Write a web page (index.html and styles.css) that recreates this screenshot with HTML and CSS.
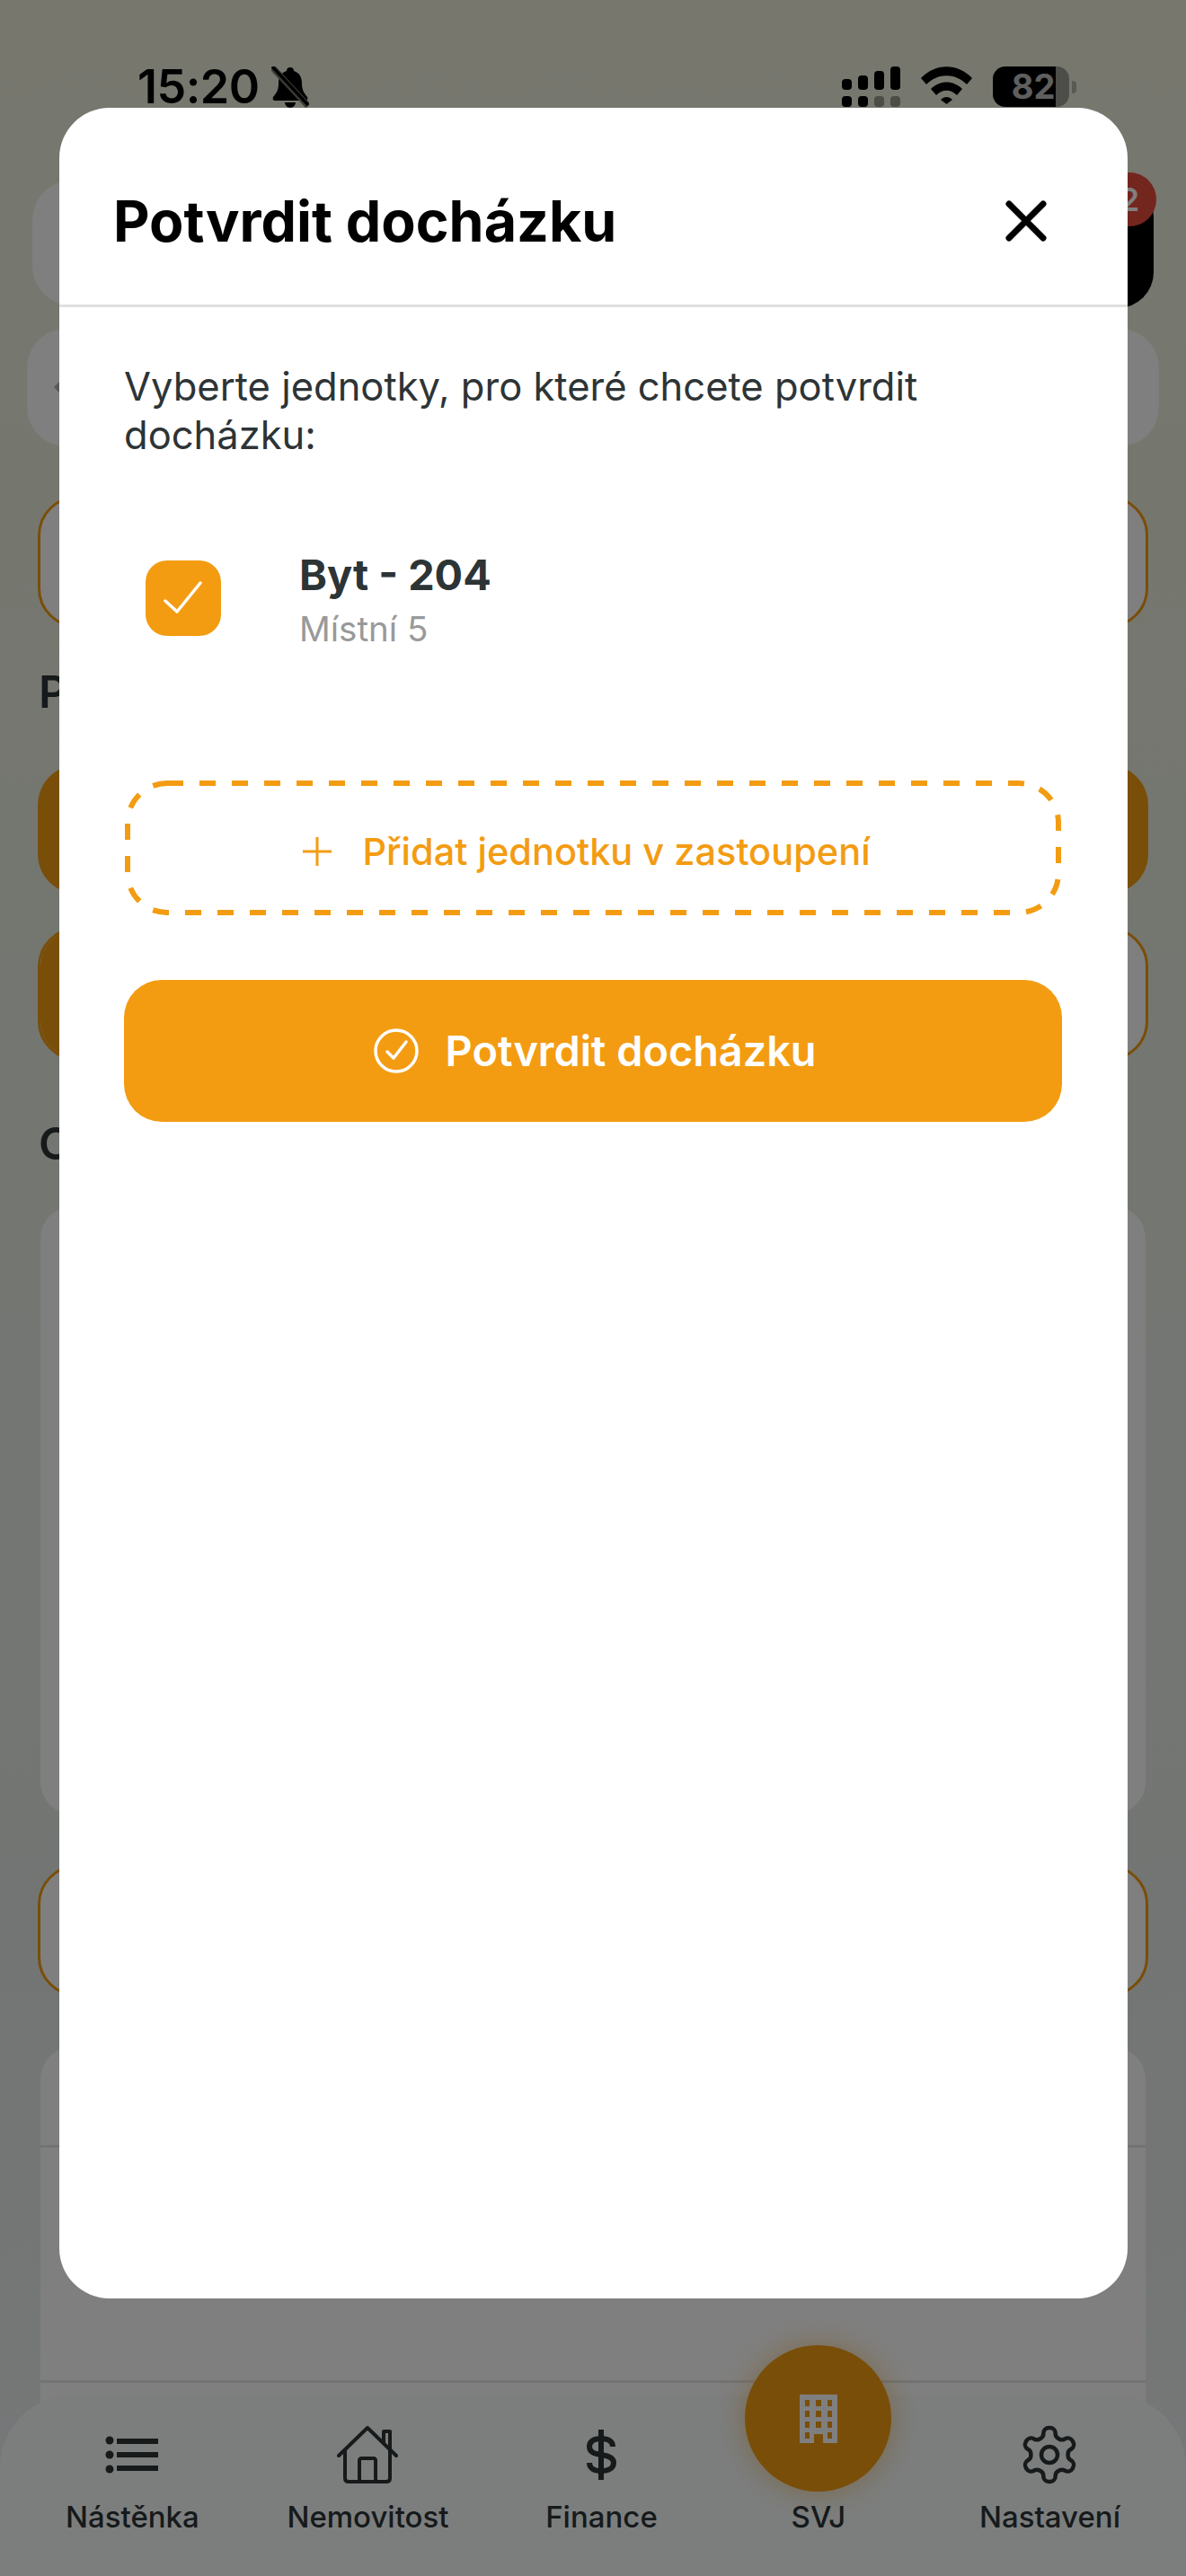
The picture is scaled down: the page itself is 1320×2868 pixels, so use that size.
FILE: index.html
```html
<!DOCTYPE html>
<html lang="cs">
<head>
  <meta charset="UTF-8">
  <meta name="viewport" content="width=device-width, initial-scale=1.0">
  <title>Potvrdit docházku</title>
  <link rel="stylesheet" href="styles.css">
</head>
<body>
  <div class="screen">
    <div class="status-bar">
      <div class="status-left">
        <span class="time">15:20</span>
        <svg class="bell" viewBox="0 0 42 46">
          <path d="M21 1c3 0 4 2 4 4 7 2 9 8 9 14 0 7 2 10 6 15 1 2 0 4-2 4H4c-2 0-3-2-2-4 4-5 6-8 6-15 0-6 2-12 9-14 0-2 1-4 4-4z"/>
          <path d="M15 40h12c0 3-3 6-6 6s-6-3-6-6z"/>
          <path d="M1 1l40 43" stroke="#77776e" stroke-width="7"/>
          <path d="M1 0l40 43" stroke="#000" stroke-width="3.5"/>
        </svg>
      </div>
      <div class="status-right">
        <svg class="signal" viewBox="0 0 65 45">
          <rect x="0" y="14" width="11" height="12" rx="4"/>
          <rect x="18" y="10" width="11" height="16" rx="4"/>
          <rect x="36" y="5" width="11" height="21" rx="4"/>
          <rect x="54" y="0" width="11" height="26" rx="4"/>
          <rect x="0" y="33" width="11" height="12" rx="4"/>
          <rect x="18" y="33" width="11" height="12" rx="4"/>
          <rect class="signal-off" x="36" y="33" width="11" height="12" rx="4"/>
          <rect class="signal-off" x="54" y="33" width="11" height="12" rx="4"/>
        </svg>
        <svg class="wifi" viewBox="0 0 57 42">
          <path d="M0 13C16-4 41-4 57 13l-6 7C38 7 19 7 6 20z"/>
          <path d="M11 25c10-10 25-10 35 0l-6 7c-7-7-16-7-23 0z"/>
          <path d="M22 37c4-4 9-4 13 0l-6.500 5z"/>
        </svg>
        <div class="battery">
          <div class="battery-body"><span class="battery-level">82</span></div>
          <div class="battery-nub"></div>
        </div>
      </div>
    </div>

    <div class="top-row">
      <div class="top-card"></div>
      <div class="top-action"><span class="badge">2</span></div>
    </div>
    <div class="search-card"><span class="chevron"></span></div>
    <div class="outline-card outline-first"></div>
    <h3 class="section-title title-first">P</h3>
    <div class="orange-card"></div>
    <div class="outline-card outline-second"><div class="outline-icon"></div></div>
    <h3 class="section-title title-second">C</h3>
    <div class="big-card"></div>
    <div class="outline-card outline-third"></div>
    <div class="list-card">
      <div class="list-row"></div>
      <div class="list-row list-row-tall"></div>
    </div>

    <nav class="tab-bar">
      <div class="tab">
        <div class="tab-icon">
          <svg width="60" height="42" viewBox="0 0 60 42" fill="none" stroke="currentColor" stroke-width="6">
            <path d="M13 6h46M13 21h46M13 36h46"/>
            <circle cx="5" cy="5" r="4.500" fill="currentColor" stroke="none"/>
            <circle cx="5" cy="21" r="4.500" fill="currentColor" stroke="none"/>
            <circle cx="5" cy="37" r="4.500" fill="currentColor" stroke="none"/>
          </svg>
        </div>
        <span class="tab-label">Nástěnka</span>
      </div>
      <div class="tab">
        <div class="tab-icon">
          <svg width="68" height="64" viewBox="0 0 68 64" fill="none" stroke="currentColor" stroke-width="4" stroke-linejoin="round" stroke-linecap="round">
            <path d="M2 33L34 2l32 31"/>
            <path d="M9 28v30c0 2 1 4 4 4h12V38c0-1 1-2 2-2h14c1 0 2 1 2 2v24h12c3 0 4-2 4-4V28"/>
            <path d="M25 62h18"/>
            <path d="M52 19V6h7v20"/>
          </svg>
        </div>
        <span class="tab-label">Nemovitost</span>
      </div>
      <div class="tab tab-finance">
        <div class="tab-icon">
          <svg width="34" height="56" viewBox="0 0 34 56" fill="none" stroke="currentColor" stroke-width="6">
            <path d="M17 0v56"/>
            <path d="M30 19c0-6-5-9-13-9S4 13 4 19s5 8 13 9 14 3 14 9-6 9-14 9-13-3-13-9"/>
          </svg>
        </div>
        <span class="tab-label">Finance</span>
      </div>
      <div class="tab tab-active">
        <div class="fab">
          <svg width="42" height="54" viewBox="0 0 42 54">
            <path class="fab-building" fill-rule="evenodd" d="M0 0h42v54H26V44H16v10H0zM6 6v7h5V6zM18 6v7h6V6zM31 6v7h5V6zM6 18v7h5v-7zM18 18v7h6v-7zM31 18v7h5v-7zM6 30v7h5v-7zM18 30v7h6v-7zM31 30v7h5v-7zM6 42v7h5v-7zM31 42v7h5v-7z"/>
          </svg>
        </div>
        <span class="tab-label">SVJ</span>
      </div>
      <div class="tab">
        <div class="tab-icon">
          <svg width="72" height="72" viewBox="0 0 24 24" fill="none" stroke="currentColor" stroke-width="1.500" stroke-linecap="round" stroke-linejoin="round">
            <path d="M12.220 2h-.44a2 2 0 0 0-2 2v.18a2 2 0 0 1-1 1.730l-.43.25a2 2 0 0 1-2 0l-.15-.08a2 2 0 0 0-2.730.73l-.22.38a2 2 0 0 0 .73 2.730l.15.1a2 2 0 0 1 1 1.720v.51a2 2 0 0 1-1 1.740l-.15.09a2 2 0 0 0-.73 2.730l.22.38a2 2 0 0 0 2.730.73l.15-.08a2 2 0 0 1 2 0l.43.25a2 2 0 0 1 1 1.730V20a2 2 0 0 0 2 2h.44a2 2 0 0 0 2-2v-.18a2 2 0 0 1 1-1.730l.43-.25a2 2 0 0 1 2 0l.15.08a2 2 0 0 0 2.730-.73l.22-.39a2 2 0 0 0-.73-2.730l-.15-.08a2 2 0 0 1-1-1.740v-.5a2 2 0 0 1 1-1.740l.15-.09a2 2 0 0 0 .73-2.730l-.22-.38a2 2 0 0 0-2.730-.73l-.15.08a2 2 0 0 1-2 0l-.43-.25a2 2 0 0 1-1-1.730V4a2 2 0 0 0-2-2z"/>
            <circle cx="12" cy="12" r="3"/>
          </svg>
        </div>
        <span class="tab-label">Nastavení</span>
      </div>
    </nav>

    <div class="overlay">
      <div class="modal">
        <div class="modal-header">
          <h2 class="modal-title">Potvrdit docházku</h2>
          <svg class="modal-close" width="46" height="46" viewBox="0 0 46 46" fill="none" stroke="#000" stroke-width="7" stroke-linecap="round">
            <path d="M4 4l38 38M42 4L4 42"/>
          </svg>
        </div>
        <div class="modal-body">
          <p class="modal-text">Vyberte jednotky, pro které chcete potvrdit docházku:</p>
          <div class="unit">
            <div class="unit-check">
              <svg width="44" height="38" viewBox="0 0 44 38" fill="none" stroke="#fff" stroke-width="3.500" stroke-linecap="round" stroke-linejoin="round">
                <path d="M2 22l13 12L41 2"/>
              </svg>
            </div>
            <div class="unit-info">
              <div class="unit-name">Byt - 204</div>
              <div class="unit-address">Místní 5</div>
            </div>
          </div>
          <div class="add-unit">
            <svg class="add-unit-border" width="1042" height="150" viewBox="0 0 1042 150" fill="none">
              <rect x="3" y="3" width="1036" height="144" rx="44" stroke="#f39c12" stroke-width="6" stroke-dasharray="18 18"/>
            </svg>
            <svg width="32" height="32" viewBox="0 0 32 32" fill="none" stroke="#f39c12" stroke-width="3">
              <path d="M16 0v32M0 16h32"/>
            </svg>
            <span class="add-unit-label">Přidat jednotku v zastoupení</span>
          </div>
          <button class="confirm">
            <svg width="50" height="50" viewBox="0 0 50 50" fill="none" stroke="#fff" stroke-width="3.500" stroke-linecap="round" stroke-linejoin="round">
              <circle cx="25" cy="25" r="23"/>
              <path d="M15 26l7 7 14-18"/>
            </svg>
            <span>Potvrdit docházku</span>
          </button>
        </div>
      </div>
    </div>
  </div>
</body>
</html>
```

FILE: styles.css
```css
* {
  box-sizing: border-box;
}
body {
  margin: 0;
  font-family: Inter, "Noto Sans", sans-serif;
}
.screen {
  position: relative;
  width: 1320px;
  height: 2868px;
  overflow: hidden;
  background: linear-gradient(180deg, #eeeedc 0%, #e8eee2 40%, #e6ebe8 75%, #ecf0f2 100%);
}

/* status bar */
.status-bar {
  display: flex;
  justify-content: space-between;
  height: 201px;
  padding: 74px 122px 0 153px;
}
.status-left {
  display: flex;
  gap: 14px;
  height: 46px;
  align-items: center;
}
.time {
  font-size: 52px;
  font-weight: 600;
  line-height: 46px;
  letter-spacing: -.5px;
  color: #000;
}
.bell {
  width: 42px;
  height: 46px;
}
.status-right {
  display: flex;
  gap: 23px;
  height: 45px;
  align-items: flex-start;
}
.signal {
  width: 65px;
  height: 45px;
}
.signal-off {
  opacity: .35;
}
.wifi {
  width: 57px;
  height: 42px;
}
.battery {
  display: flex;
  align-items: center;
  gap: 3px;
}
.battery-body {
  width: 85px;
  height: 45px;
  border-radius: 14px;
  overflow: hidden;
  background: linear-gradient(90deg, #000 82%, #9a9a92 82%);
  text-align: center;
}
.battery-level {
  display: block;
  width: 86px;
  padding-left: 4px;
  font-size: 38px;
  font-weight: 700;
  line-height: 45px;
  color: #fff;
  opacity: .75;
}
.battery-nub {
  width: 5px;
  height: 14px;
  border-radius: 0 4px 4px 0;
  background: #b4b4aa;
}

/* page behind the dialog */
.top-row {
  display: flex;
  justify-content: space-between;
  margin-left: 36px;
  margin-right: 36px;
  height: 142px;
}
.top-card {
  width: 900px;
  height: 139px;
  background: #fff;
  border-radius: 44px;
}
.top-action {
  position: relative;
  width: 200px;
  height: 142px;
  background: #000;
  border-radius: 40px;
}
.badge {
  position: absolute;
  right: -3px;
  top: -9px;
  width: 60px;
  height: 60px;
  border-radius: 50%;
  background: #e74c3c;
  color: #fff;
  font-size: 36px;
  font-weight: 600;
  line-height: 60px;
  text-align: center;
}
.search-card {
  display: flex;
  align-items: center;
  margin: 23px 30px 0;
  height: 131px;
  padding-left: 30px;
  background: #fff;
  border-radius: 44px;
}
.chevron {
  width: 0;
  height: 0;
  margin-top: -2px;
  border: 10px solid transparent;
  border-left: 0;
  border-right-color: #b0b0b0;
}
.outline-card {
  margin-left: 42px;
  margin-right: 42px;
  background: #fff;
  border: 3px solid #f39c12;
  border-radius: 44px;
  overflow: hidden;
}
.outline-first {
  margin-top: 55px;
  height: 147px;
}
.section-title {
  margin: 0 0 0 43px;
  font-size: 50px;
  font-weight: 600;
  line-height: 60px;
  color: #2d3436;
}
.title-first {
  margin-top: 41px;
}
.orange-card {
  margin: 52px 42px 0;
  height: 143px;
  background: #f39c12;
  border-radius: 44px;
}
.outline-second {
  margin-top: 37px;
  height: 149px;
}
.outline-icon {
  width: 200px;
  height: 100%;
  background: #f39c12;
}
.title-second {
  margin-top: 62px;
}
.big-card {
  margin: 40px 45px 0;
  height: 677px;
  background: #fff;
  border-radius: 36px;
}
.outline-third {
  margin-top: 56px;
  height: 147px;
}
.list-card {
  margin: 56px 45px 0;
  padding-top: 109px;
  background: #fff;
  border-radius: 36px 36px 0 0;
}
.list-row {
  height: 262px;
  border-top: 3px solid #e6e6e6;
}
.list-row-tall {
  height: 220px;
}

/* bottom tabs */
.tab-bar {
  position: absolute;
  left: 0;
  right: 0;
  bottom: 0;
  height: 201px;
  display: flex;
  justify-content: space-between;
  align-items: flex-end;
  padding: 0 73px 44px;
  background: #f8fcfc;
  border-radius: 80px 80px 0 0;
  color: #2d3436;
}
.tab {
  display: flex;
  flex-direction: column;
  align-items: center;
}
.tab-finance {
  margin-left: 10px;
}
.tab-icon {
  display: flex;
  align-items: center;
  justify-content: center;
  height: 66px;
  margin-bottom: 14px;
}
.tab-label {
  font-size: 33px;
  font-weight: 500;
  line-height: 44px;
  white-space: nowrap;
}
.fab {
  display: flex;
  align-items: center;
  justify-content: center;
  width: 163px;
  height: 163px;
  margin-bottom: 6px;
  border-radius: 50%;
  background: #f39c12;
  box-shadow: 0 0 34px rgba(243, 156, 18, .45);
}
.fab-building {
  fill: #fff;
}

/* dialog */
.overlay {
  position: absolute;
  inset: 0;
  padding: 120px 65px 309px 66px;
  background: rgba(0, 0, 0, .5);
}
.modal {
  height: 100%;
  background: #fff;
  border-radius: 56px;
}
.modal-header {
  display: flex;
  align-items: center;
  justify-content: space-between;
  height: 222px;
  padding: 32px 90px 0 60px;
  border-bottom: 3px solid #e0e0e0;
}
.modal-title {
  margin: 0;
  font-size: 62.700px;
  font-weight: 700;
  color: #000;
}
.modal-body {
  padding: 61px 73px 0 72px;
}
.modal-text {
  margin: 0;
  font-size: 43.500px;
  line-height: 54px;
  color: #2d3436;
}
.unit {
  display: flex;
  align-items: center;
  gap: 87px;
  margin-top: 102px;
  padding-left: 24px;
}
.unit-check {
  display: flex;
  align-items: center;
  justify-content: center;
  width: 84px;
  height: 84px;
  margin-bottom: 6px;
  border-radius: 24px;
  background: #f39c12;
}
.unit-name {
  font-size: 46.800px;
  font-weight: 700;
  line-height: 54px;
  color: #2d3436;
}
.unit-address {
  margin-top: 9px;
  font-size: 38.500px;
  line-height: 48px;
  color: #999;
}
.add-unit {
  position: relative;
  display: flex;
  align-items: center;
  justify-content: center;
  gap: 34px;
  height: 150px;
  margin-top: 145px;
  padding: 8px 14px 0 0;
}
.add-unit-border {
  position: absolute;
  left: 1px;
  top: 0;
}
.add-unit-label {
  font-size: 41.500px;
  font-weight: 500;
  color: #f39c12;
}
.confirm {
  display: flex;
  align-items: center;
  justify-content: center;
  gap: 30px;
  width: 100%;
  height: 158px;
  margin-top: 72px;
  padding-left: 10px;
  border: none;
  border-radius: 42px;
  background: #f39c12;
  color: #fff;
  font-family: inherit;
  font-size: 46.800px;
  font-weight: 600;
}
```
